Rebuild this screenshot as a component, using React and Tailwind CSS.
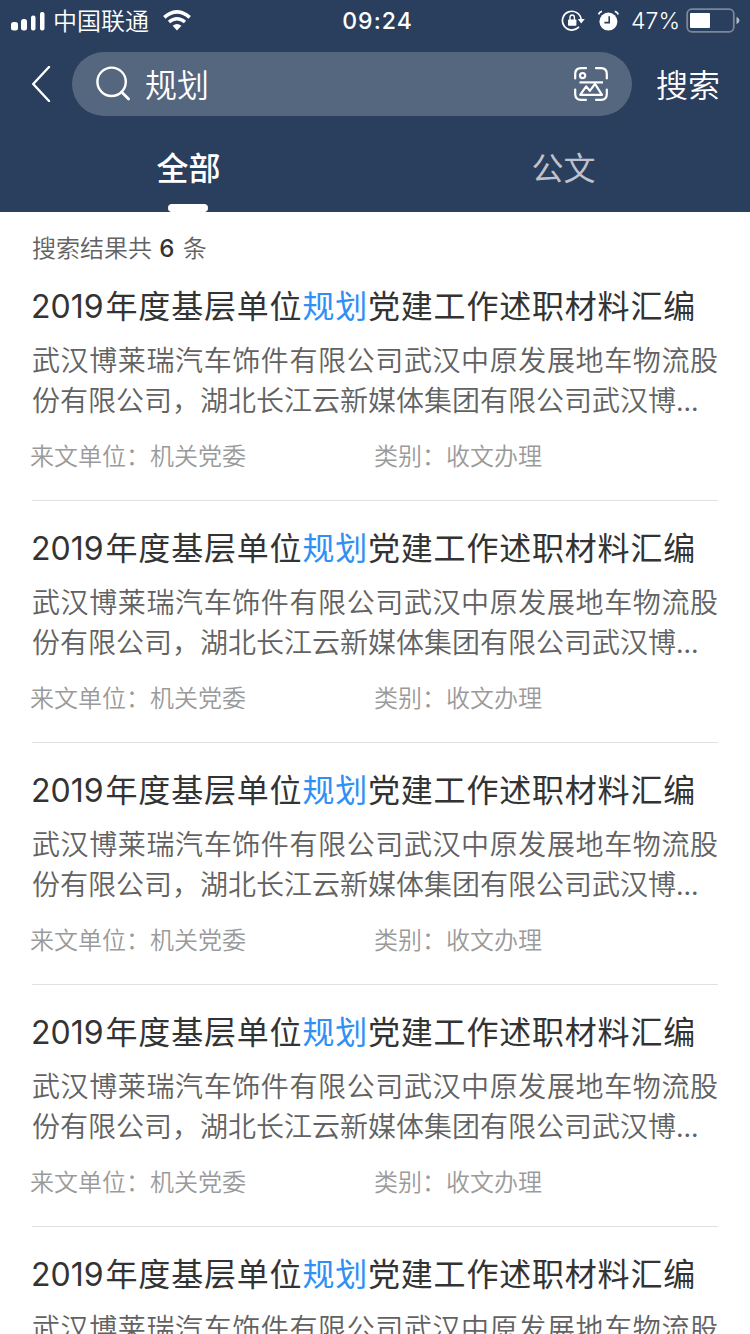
import React, { useState } from "react";

const KEYWORD = "规划";

const TABS = [
  { key: "all", label: "全部" },
  { key: "doc", label: "公文" },
];

const RESULTS = Array.from({ length: 6 }, (_, i) => ({
  id: i + 1,
  year: "2019",
  title: "年度基层单位规划党建工作述职材料汇编",
  summary:
    "武汉博莱瑞汽车饰件有限公司武汉中原发展地车物流股份有限公司，湖北长江云新媒体集团有限公司武汉博...",
  unit: "机关党委",
  category: "收文办理",
}));

/* ================= STATUS BAR ================= */
const StatusBar = () => (
  <div className="grid h-10 grid-cols-3 items-center text-[24px] leading-10 font-[350] text-white">
    <div className="flex items-center pl-[11px]">
      <svg width="34" height="20" viewBox="0 0 34 20" fill="#fff">
        <rect x="0" y="11" width="7" height="8.5" rx="2.5" />
        <rect x="10" y="8" width="6" height="11.5" rx="2.5" />
        <rect x="20" y="4.5" width="4.5" height="15" rx="2" />
        <rect x="29" y="1" width="4.5" height="18.5" rx="2" />
      </svg>
      <span className="-mt-px ml-2 h-10">中国联通</span>
      <svg className="ml-3.5" width="28" height="21" viewBox="0 0 28 21" fill="none" stroke="#fff">
        <path d="M1.3 7.3 Q14 -3.6 26.7 7.3" strokeWidth="3.6" />
        <path d="M6 12 Q14 5.4 22 12" strokeWidth="3.4" />
        <path d="M14 20.5 L9.6 15.8 Q14 12.2 18.4 15.8 Z" fill="#fff" stroke="none" />
      </svg>
    </div>

    <div className="pt-px pl-[5px] text-center font-['Inter'] text-[23px] font-medium tracking-[1.1px]">
      09:24
    </div>

    <div className="flex items-center justify-end pr-2.5">
      <svg width="24" height="22" viewBox="0 0 24 22" fill="none" stroke="#fff" strokeWidth="1.7">
        <path d="M18 16.8 A9.4 9.4 0 1 1 20.2 9.6" />
        <path d="M16.8 9 H23.8 L20.2 13.6 Z" fill="#fff" stroke="none" />
        <rect x="7" y="9.4" width="8.4" height="6.4" rx="0.8" fill="#fff" stroke="none" />
        <path d="M9 10 V7.2 A2.2 2.2 0 0 1 13.4 7.2 V10" strokeWidth="1.4" />
      </svg>
      <svg className="ml-3" width="22" height="22" viewBox="0 0 22 22" fill="none">
        <circle cx="11.4" cy="11.6" r="9" fill="#fff" />
        <path d="M12.2 6.2 V12.6 H7.4" stroke="#2a3e5d" strokeWidth="1.6" />
        <path d="M1.6 4.4 Q2.4 2 5 1.4 M21.2 4.4 Q20.4 2 17.8 1.4" stroke="#fff" strokeWidth="1.8" />
      </svg>
      <span className="mr-1.5 ml-3 pt-px font-['Inter'] text-[23px] font-light">47%</span>
      <svg width="54" height="25" viewBox="0 0 54 25" fill="none">
        <rect x="1.2" y="1.2" width="46.6" height="22.6" rx="4.5" stroke="#7b879a" strokeWidth="1.8" />
        <rect x="4" y="5" width="20" height="15" rx="1" fill="#fff" />
        <path d="M50.5 8.8 Q53.5 10.5 53.5 12.5 Q53.5 14.5 50.5 16.2 Z" fill="#b4bcc8" />
      </svg>
    </div>
  </div>
);

/* ================= SEARCH BAR ================= */
const SearchBar = () => (
  <div className="flex h-16 items-center pl-8 text-[32px] leading-[44px] text-white">
    <button className="w-10">
      <svg width="20" height="36" viewBox="0 0 20 36" fill="none" stroke="#fff" strokeWidth="2.4" strokeLinecap="round" strokeLinejoin="round">
        <path d="M17 1 L1.2 18 L17 35" />
      </svg>
    </button>

    <div className="flex h-16 w-[560px] items-center rounded-full bg-[#55667f] pr-6 pl-6">
      <svg width="36" height="36" viewBox="0 0 36 36" fill="none" stroke="#fff" strokeWidth="2.4" strokeLinecap="round">
        <circle cx="15.6" cy="15.8" r="14.2" />
        <path d="M25.6 26 L32.6 33" strokeWidth="2.8" />
      </svg>
      <span className="ml-[13px] flex-1 pb-[3px] font-[350]">{KEYWORD}</span>
      <svg width="34" height="34" viewBox="0 0 34 34" fill="none" stroke="#fff" strokeWidth="2.2">
        <path d="M1.2 11.5 V7 Q1.2 1.2 7 1.2 H12 M22 1.2 H27 Q32.8 1.2 32.8 7 V11.5 M32.8 22.5 V27 Q32.8 32.8 27 32.8 H22 M12 32.8 H7 Q1.2 32.8 1.2 27 V22.5" strokeLinecap="round" />
        <circle cx="8.6" cy="8.6" r="2.6" />
        <path d="M5.5 15.4 H29" />
        <path d="M6.2 27.8 L12.2 19.4 L15.8 23.8 L21 16.8 L28 27.8 Z" strokeLinejoin="round" />
      </svg>
    </div>

    <button className="ml-6 pb-[3px] font-[350]">搜索</button>
  </div>
);

const ResultTitle = ({ year, title }) => {
  const [before, after] = title.split(KEYWORD);
  return (
    <h3 className="-ml-px h-10 text-[32px] leading-10 font-normal tracking-[0.8px] whitespace-nowrap text-[#333]">
      <span className="mr-0.5 font-['Inter'] tracking-normal">{year}</span>
      {before}
      <span className="text-[#308ff5]">{KEYWORD}</span>
      {after}
    </h3>
  );
};

const ResultItem = ({ item }) => (
  <li className="h-[242px] border-b border-[#e1e1e1] pt-[25px]">
    <ResultTitle year={item.year} title={item.title} />
    <p className="mt-[15px] text-justify text-[28px] leading-10 font-[350] text-[#626262]">
      {item.summary}
    </p>
    <div className="mt-[18px] -ml-0.5 flex text-[24px] leading-9 font-[350] text-[#9a9a9a]">
      <span className="w-[344px]">来文单位：{item.unit}</span>
      <span>类别：{item.category}</span>
    </div>
  </li>
);

const App = () => {
  const [active, setActive] = useState("all");

  return (
    <div className="h-[1334px] w-[750px] overflow-hidden bg-white font-['Noto_Sans_CJK_SC',sans-serif]">
      {/* ===== HEADER ===== */}
      <header className="h-[212px] bg-[#2a3e5d]">
        <StatusBar />
        <div className="mt-3">
          <SearchBar />
        </div>

        <nav className="grid h-24 grid-cols-2">
          {TABS.map((tab) => (
            <button
              key={tab.key}
              onClick={() => setActive(tab.key)}
              className={`flex flex-col items-center justify-between pt-[26px] text-[32px] leading-[48px] ${
                active === tab.key
                  ? "font-medium text-white"
                  : "font-normal text-[#bfc2cc]"
              }`}
            >
              <span className="pl-0.5">{tab.label}</span>
              {active === tab.key && (
                <span className="h-2 w-10 rounded-full bg-white" />
              )}
            </button>
          ))}
        </nav>
      </header>

      {/* ===== RESULTS ===== */}
      <main className="px-8">
        <p className="h-[47px] pt-[17px] text-[24px] leading-9 font-[350] text-[#626262]">
          搜索结果共 <span className="mr-[3px] ml-0.5 font-['Inter'] font-medium text-[#333]">{RESULTS.length}</span> 条
        </p>
        <ul>
          {RESULTS.map((item) => (
            <ResultItem key={item.id} item={item} />
          ))}
        </ul>
      </main>
    </div>
  );
};

export default App;
